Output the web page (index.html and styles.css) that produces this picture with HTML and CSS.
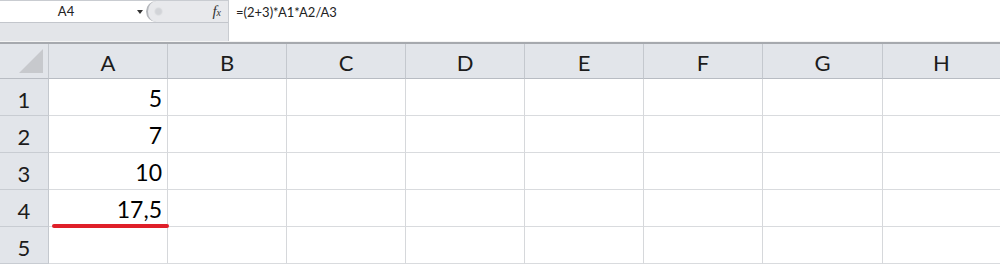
FILE: index.html
```html
<!DOCTYPE html>
<html lang="en">

<head>
    <meta charset="UTF-8">
    <meta name="viewport" content="width=device-width, initial-scale=1.0">
    <title>Sheet</title>
    <link rel="stylesheet" href="styles.css">
</head>

<body>
    <div class="bar">
        <div class="bar-left">
            <div class="name-row">
                <div class="name-box">A4</div>
                <div class="drop"><span class="tri"></span></div>
                <div class="pill">
                    <span class="knob"></span>
                    <span class="fx"><i>f</i><small>x</small></span>
                </div>
            </div>
            <div class="bar-fill"></div>
        </div>
        <div class="formula">=(2+3)*A1*A2/A3</div>
    </div>
    <div class="split"></div>

    <div class="sheet">
        <div class="hd corner"><span class="corner-tri"></span></div>
        <div class="hd">A</div>
        <div class="hd">B</div>
        <div class="hd">C</div>
        <div class="hd">D</div>
        <div class="hd">E</div>
        <div class="hd">F</div>
        <div class="hd">G</div>
        <div class="hd last">H</div>

        <div class="rh">1</div>
        <div class="cell num">5</div>
        <div class="cell"></div><div class="cell"></div><div class="cell"></div><div class="cell"></div><div class="cell"></div><div class="cell"></div><div class="cell last"></div>

        <div class="rh">2</div>
        <div class="cell num">7</div>
        <div class="cell"></div><div class="cell"></div><div class="cell"></div><div class="cell"></div><div class="cell"></div><div class="cell"></div><div class="cell last"></div>

        <div class="rh">3</div>
        <div class="cell num">10</div>
        <div class="cell"></div><div class="cell"></div><div class="cell"></div><div class="cell"></div><div class="cell"></div><div class="cell"></div><div class="cell last"></div>

        <div class="rh">4</div>
        <div class="cell num marked">17,5<span class="underline"></span></div>
        <div class="cell"></div><div class="cell"></div><div class="cell"></div><div class="cell"></div><div class="cell"></div><div class="cell"></div><div class="cell last"></div>

        <div class="rh">5</div>
        <div class="cell"></div>
        <div class="cell"></div><div class="cell"></div><div class="cell"></div><div class="cell"></div><div class="cell"></div><div class="cell"></div><div class="cell last"></div>
    </div>
</body>

</html>
```

FILE: styles.css
```css
html,
body {
    height: 100%;
    overflow: hidden;
}

body {
    margin: 0;
    background: #fff;
    font-family: Lato, "Liberation Sans", sans-serif;
    color: #222;
}

/* formula bar */

.bar {
    display: flex;
    height: 41px;
    background: #e3e5e9;
    border-top: 1px solid #c9ccd1;
    box-sizing: border-box;
}

.bar-left {
    width: 228px;
    display: flex;
    flex-direction: column;
}

.name-row {
    display: flex;
    height: 21px;
    border-bottom: 1px solid #c3c6cc;
    background: #fff;
}

.name-box {
    width: 132px;
    text-align: center;
    font-size: 13px;
    line-height: 21px;
    padding-right: 2px;
}

.drop {
    width: 12px;
    display: flex;
    align-items: center;
    justify-content: center;
}

.tri {
    width: 0;
    height: 0;
    border-left: 3px solid transparent;
    border-right: 3px solid transparent;
    border-top: 4px solid #333;
}

.pill {
    flex: 1;
    display: flex;
    align-items: center;
    justify-content: space-between;
    background: #e8e9ec;
    border-left: 2px solid #b5b8bd;
    border-radius: 12px 0 0 12px;
    padding: 0 7px 0 6px;
}

.knob {
    width: 9px;
    height: 9px;
    border-radius: 50%;
    background: #d2d4d8;
    box-shadow: inset 0 0 2px #fff;
}

.fx {
    font-family: "Liberation Serif", serif;
    font-size: 15px;
    color: #333;
}

.fx small {
    font-size: 10px;
    font-style: italic;
}

.bar-fill {
    flex: 1;
}

.formula {
    flex: 1;
    background: #fff;
    border-left: 1px solid #c9ccd1;
    font-size: 13px;
    padding: 4px 0 0 7px;
    margin-top: -1px;
}

.split {
    height: 3px;
    border-top: 1px solid #f4f4f4;
    background: #a6a9ae;
    box-sizing: border-box;
}

/* sheet */

.sheet {
    display: grid;
    grid-template-columns: 49px repeat(6, 119px) 120px 1fr;
    grid-template-rows: 35px repeat(4, 37px) 1fr;
    height: 220px;
}

.hd,
.rh {
    background: #e2e5ea;
    color: #1c1c1c;
    font-size: 22px;
    display: flex;
    align-items: center;
    justify-content: center;
    border-right: 1px solid #c4c8ce;
    border-bottom: 1px solid #b8bcc3;
    box-sizing: border-box;
    padding-top: 3px;
}

.rh {
    border-bottom-color: #c8ccd2;
    padding-top: 4px;
}

.hd.last,
.cell.last {
    border-right: none;
}

.corner {
    justify-content: flex-end;
    align-items: flex-end;
    padding: 0 5px 5px 0;
}

.corner-tri {
    width: 0;
    height: 0;
    border-left: 24px solid transparent;
    border-bottom: 24px solid #c7c9cd;
}

.cell {
    border-right: 1px solid #d6d8db;
    border-bottom: 1px solid #d9dbde;
    box-sizing: border-box;
    font-size: 23px;
    color: #000;
}

.num {
    display: flex;
    align-items: flex-end;
    justify-content: flex-end;
    padding: 0 5px 3px 0;
}

.marked {
    position: relative;
}

.underline {
    position: absolute;
    left: 3px;
    right: -2px;
    bottom: -2px;
    height: 4px;
    border-radius: 2px;
    background: #df1f29;
}
```
